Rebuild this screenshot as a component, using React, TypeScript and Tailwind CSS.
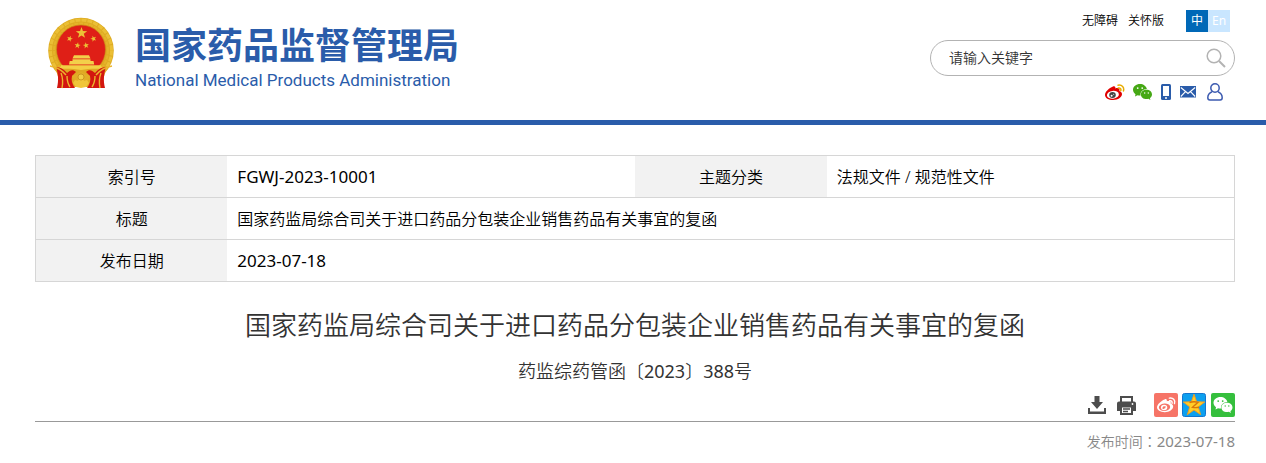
import React from "react";

const STAR = "M0 -10L2.35 -3.24L9.5 -3.1L3.8 1.24L5.9 8.1L0 4L-5.9 8.1L-3.8 1.24L-9.5 -3.1L-2.35 -3.24Z";

function Emblem() {
  return (
    <svg width="66" height="72" viewBox="0 0 66 72" aria-hidden="true">
      <circle cx="33" cy="33.500" r="32.800" fill="#deab22" />
      <circle cx="33" cy="33.500" r="30.500" fill="none" stroke="#ebbf35" strokeWidth="3" strokeDasharray="5 1" />
      <circle cx="33" cy="33.500" r="27" fill="none" stroke="#e5b32a" strokeWidth="2" strokeDasharray="4 1" />
      <circle cx="33" cy="32.500" r="24.500" fill="#df1f17" stroke="#c98d18" strokeWidth="0.6" />
      <g fill="#ecc136">
        <path d={STAR} transform="translate(33.500 16) scale(.6)" />
        <path d={STAR} transform="translate(21.700 21.700) scale(.32) rotate(20)" />
        <path d={STAR} transform="translate(45.500 21.700) scale(.32) rotate(-20)" />
        <path d={STAR} transform="translate(29.500 28.500) scale(.32) rotate(10)" />
        <path d={STAR} transform="translate(38 28.500) scale(.32) rotate(-10)" />
      </g>
      <path d="M26 38.300h15l1.500 3.200h-18zM24.500 42.300h18v1.700h3l.7 3.500H21l.7-3.500h2.800z" fill="#f3d04a" />
      <path d="M13 48.300h40l1.500 4.700h-43z" fill="#f3cf45" />
      <path d="M8 53c8-2 17-1 25 0 8-1 17-2 25 0l-3 10-13 7H24l-13-7z" fill="#e0a823" />
      <path d="M8 50c4 0 8 2 11 6 3-3 6-4 9-1l-4 4c-1 4 0 8 3 12H9c2-8 1-15-1-21zM58 50c-4 0-8 2-11 6-3-3-6-4-9-1l4 4c1 4 0 8-3 12h18c-2-8-1-15 1-21z" fill="#d3160f" />
      <path d="M2 49c6 1 12 4 16 9M64 49c-6 1-12 4-16 9M13 56c2 5 2 10 1 15M53 56c-2 5-2 10-1 15M19 59c0 4 1 8 3 11M47 59c0 4-1 8-3 11" fill="none" stroke="#ebb52d" strokeWidth="1.400" />
      <path d="M24 59l9-4 9 4-3 5H27z" fill="#e2ad27" />
      <path d="M25 66l2-3 3 1 1-3h4l1 3 3-1 2 3-3 4-5 1-5-1z" fill="#f0c539" />
      <circle cx="33" cy="60" r="3" fill="#f3cf45" stroke="#bf8517" strokeWidth="0.7" />
    </svg>
  );
}

function WeiboShape({ body, hole, eye, wave }: { body: string; hole: string; eye: string; wave: string }) {
  return (
    <>
      <path fill={body} d="M8 2.5c1.6-.8 2.8.2 2.3 2 1.8-.7 4.600-.6 4.200 1.700l-.2.7c1.800.6 2.700 1.700 2.700 3.200C17 13.300 13 16 8.100 16 3.600 16 0 14 0 10.900 0 8 4 3.900 8 2.500z" />
      <ellipse cx="7.900" cy="10.800" rx="6" ry="3.900" fill={hole} transform="rotate(-6 7.900 10.800)" />
      <ellipse cx="7.500" cy="11" rx="3.300" ry="2.900" fill={eye} />
      <circle cx="6.600" cy="11.700" r="1" fill={hole} />
      <circle cx="8.700" cy="10.200" r=".5" fill={hole} />
      <path d="M13 1.200c3.900-.8 6.600 2.200 5.400 5.700M13.300 4c1.800-.4 3 .9 2.500 2.500" fill="none" stroke={wave} strokeWidth="1.500" strokeLinecap="round" />
    </>
  );
}

function WechatShape({ color, eye }: { color: string; eye: string }) {
  return (
    <>
      <path fill={color} d="M7 0C3.100 0 0 2.600 0 5.800c0 1.800 1 3.400 2.500 4.500L2 12.500l2.500-1.300c.8.2 1.600.4 2.500.4h.6C6.800 8 9.800 5 14 5h-.1C13.300 2.100 10.400 0 7 0z" />
      <path fill={color} d="M13.500 5.700c-3.200 0-5.600 2.100-5.600 4.700s2.400 4.700 5.600 4.700c.7 0 1.300-.1 1.900-.3l2 1.200-.5-1.900c1.300-.9 2.100-2.200 2.100-3.700 0-2.600-2.400-4.700-5.500-4.700z" />
      <g fill={eye}>
        <circle cx="4.700" cy="4.100" r=".9" />
        <circle cx="9.200" cy="4.100" r=".9" />
        <circle cx="11.700" cy="9" r=".7" />
        <circle cx="15.300" cy="9" r=".7" />
      </g>
    </>
  );
}

function Num({ children }: { children: string }) {
  return <span className="text-[17px] font-normal">{children}</span>;
}

const label = "bg-[#f2f2f2] text-center font-[350]";
const cell = "px-[10px] text-left";
const row = "h-[42px] border-b border-[#d6d6d6]";

export default function App() {
  return (
    <div className="bg-white font-['Noto_Sans','Noto_Sans_CJK_SC',sans-serif] text-black">
      <header className="border-b-5 border-[#2a5caa]">
        <div className="flex h-[120px] justify-between pr-[31px] pl-12">
          <a href="#" className="flex items-start pt-[17px] text-[#2a5caa]">
            <Emblem />
            <span className="ml-[21px] flex flex-col pt-[9px]">
              <span className="text-[36px] leading-[40px] font-bold whitespace-nowrap">国家药品监督管理局</span>
              <span className="mt-1 font-['Roboto',sans-serif] text-[17px] leading-5 whitespace-nowrap">
                National Medical Products Administration
              </span>
            </span>
          </a>
          <div className="flex w-[305px] flex-col pt-[10px] font-[350]">
            <div className="flex h-[22px] items-center justify-end pr-[5px] text-[12px] leading-[22px]">
              <a href="#">无障碍</a>
              <a href="#" className="ml-[10px]">关怀版</a>
              <a href="#" className="ml-[22px] w-[22px] bg-[#0068b7] text-center font-normal text-white">中</a>
              <a href="#" className="w-[22px] bg-[#c9e6ff] text-center font-normal text-white">En</a>
            </div>
            <form className="mt-2 flex h-9 items-center rounded-full border border-[#b3b3b3] pr-[8px] pl-[18px]">
              <input
                type="text"
                aria-label="请输入关键字"
                placeholder="请输入关键字"
                className="min-w-0 flex-1 bg-transparent text-[14px] leading-5 outline-none placeholder:text-[#333]"
              />
              <button type="button" aria-label="搜索">
                <svg width="20" height="20" viewBox="0 0 20 20" fill="none" stroke="#b3b3b3" strokeWidth="1.5">
                  <circle cx="8" cy="8" r="6.800" />
                  <path d="M13 13l6 6" strokeWidth="2" />
                </svg>
              </button>
            </form>
            <div className="mt-[6px] flex h-5 items-center justify-end pr-3">
              <a href="#" aria-label="微博">
                <svg width="20" height="17" viewBox="0 0 20 17">
                  <WeiboShape body="#e00000" hole="#fff" eye="#444" wave="#e8ac00" />
                </svg>
              </a>
              <a href="#" aria-label="微信" className="ml-2">
                <svg width="19" height="16" viewBox="0 0 19 16">
                  <WechatShape color="#46a815" eye="#fff" />
                </svg>
              </a>
              <a href="#" aria-label="手机" className="ml-[9px]">
                <svg width="10" height="16" viewBox="0 0 10 16">
                  <rect width="10" height="16" rx="1.500" fill="#2a5caa" />
                  <path d="M2 2h6v10H2z" fill="#fff" />
                  <circle cx="5" cy="14" r="1" fill="#fff" />
                </svg>
              </a>
              <a href="#" aria-label="邮箱" className="ml-[9px]">
                <svg width="16" height="12" viewBox="0 0 16 12">
                  <rect width="16" height="11.500" fill="#2a5caa" />
                  <path d="M.8 1.500L8 7.500l7.200-6M.8 10.500l4.700-4.800M15.200 10.500l-4.700-4.800" fill="none" stroke="#fff" strokeWidth="1.100" />
                </svg>
              </a>
              <a href="#" aria-label="个人中心" className="ml-[11px]">
                <svg width="16" height="18" viewBox="0 0 16 18" fill="none" stroke="#3d5bb0" strokeWidth="1.500">
                  <circle cx="8" cy="5" r="4.200" />
                  <path d="M5 8.700C2.500 9.700.8 12 .8 14.800c0 1.500.7 2.200 2 2.200h10.400c1.300 0 2-.7 2-2.200 0-2.800-1.700-5.100-4.200-6.100" />
                </svg>
              </a>
            </div>
          </div>
        </div>
      </header>

      <main className="pt-[30px] pr-[31px] pl-[35px] font-[350]">
        <table className="w-full table-fixed border-collapse border border-[#d6d6d6] text-[16px] leading-6">
          <colgroup>
            <col className="w-[16%]" />
            <col className="w-[34%]" />
            <col className="w-[16%]" />
            <col className="w-[34%]" />
          </colgroup>
          <tbody>
            <tr className={row}>
              <th scope="row" className={label}>索引号</th>
              <td className={cell}><Num>FGWJ-2023-10001</Num></td>
              <th scope="row" className={label}>主题分类</th>
              <td className={cell}>法规文件 / 规范性文件</td>
            </tr>
            <tr className={row}>
              <th scope="row" className={label}>标题</th>
              <td className={cell} colSpan={3}>国家药监局综合司关于进口药品分包装企业销售药品有关事宜的复函</td>
            </tr>
            <tr className={row}>
              <th scope="row" className={label}>发布日期</th>
              <td className={cell} colSpan={3}><Num>2023-07-18</Num></td>
            </tr>
          </tbody>
        </table>

        <h1 className="mt-[23px] text-center text-[26px] leading-10 font-[350] text-[#333]">
          国家药监局综合司关于进口药品分包装企业销售药品有关事宜的复函
        </h1>
        <p className="mt-3 text-center text-[18px] leading-7 text-[#333]">
          药监综药管函〔<span className="font-normal">2023</span>〕<span className="font-normal">388</span>号
        </p>

        <div className="mt-2 flex items-center justify-end border-b border-[#999] pb-1">
          <button type="button" aria-label="下载">
            <svg width="18" height="18" viewBox="0 0 18 18" fill="#4d4d4d">
              <path d="M6.500 0h5v6H15l-6 7-6-7h3.500zM0 12h2v3.500h14V12h2v6H0z" />
            </svg>
          </button>
          <button type="button" aria-label="打印" className="ml-[11px]">
            <svg width="19" height="19" viewBox="0 0 19 19" fill="none" stroke="#4d4d4d" strokeWidth="2">
              <path d="M4 6V1h11v5" />
              <path d="M2 5.500h15a2 2 0 0 1 2 2V15h-3v-4.500H3V15H0V7.500a2 2 0 0 1 2-2z" fill="#4d4d4d" stroke="none" />
              <path d="M4 10.500h11V18H4z" fill="#fff" />
              <path d="M6 13h7M6 15.500h5" strokeWidth="1.300" />
              <circle cx="15.500" cy="8" r=".9" fill="#fff" stroke="none" />
            </svg>
          </button>
          <a href="#" aria-label="分享到微博" className="ml-[18px]">
            <svg width="24" height="24" viewBox="0 0 24 24">
              <rect width="24" height="24" rx="2" fill="#f67467" />
              <g transform="translate(3 4) scale(.95)">
                <WeiboShape body="#fff" hole="#f67467" eye="#fff" wave="#fff" />
                <ellipse cx="7.500" cy="11" rx="1.400" ry="1.200" fill="#f67467" />
              </g>
            </svg>
          </a>
          <a href="#" aria-label="分享到QQ空间" className="ml-1">
            <svg width="24" height="24" viewBox="0 0 24 24">
              <rect x=".5" y=".5" width="23" height="23" rx="2" fill="#0da0ef" stroke="#1476cf" />
              <path d={STAR} transform="translate(12 12.500) scale(1.130)" fill="#ffcd28" stroke="#f79b1a" strokeWidth=".8" strokeLinejoin="round" />
              <path d="M7.500 9.500c3-1 6-.9 8.500-.2l-5.500 5c2 .4 4 .4 6.500 0" fill="none" stroke="#d9760b" strokeWidth="1.400" />
            </svg>
          </a>
          <a href="#" aria-label="分享到微信" className="ml-[5px]">
            <svg width="24" height="24" viewBox="0 0 24 24">
              <rect width="24" height="24" rx="2" fill="#35bf3d" />
              <g transform="translate(2.500 4)">
                <WechatShape color="#fff" eye="#35bf3d" />
              </g>
            </svg>
          </a>
        </div>
        <p className="mt-[7px] text-right text-[14px] leading-6 text-[#888]">
          发布时间<span className="font-['Noto_Sans_CJK_TC',sans-serif]">：</span>
          <span className="text-[15px] font-normal">2023-07-18</span>
        </p>
      </main>
    </div>
  );
}
